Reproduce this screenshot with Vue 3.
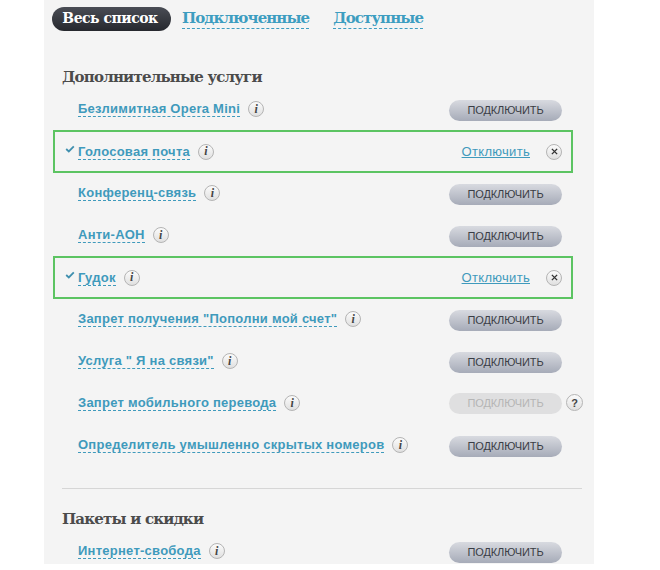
<script setup>
const groupA = [
  { name: 'Безлимитная Opera Mini', state: 'off' },
  { name: 'Голосовая почта', state: 'on' },
  { name: 'Конференц-связь', state: 'off' },
  { name: 'Анти-АОН', state: 'off' },
  { name: 'Гудок', state: 'on' },
  { name: 'Запрет получения "Пополни мой счет"', state: 'off' },
  { name: 'Услуга " Я на связи"', state: 'off' },
  { name: 'Запрет мобильного перевода', state: 'disabled' },
  { name: 'Определитель умышленно скрытых номеров', state: 'off' },
]
const groupB = [{ name: 'Интернет-свобода', state: 'off' }]
const groups = [
  { title: 'Дополнительные услуги', items: groupA },
  { title: 'Пакеты и скидки', items: groupB },
]
</script>

<template>
  <div class="page">
    <div class="panel">
      <nav class="tabs">
        <span class="pill">Весь список</span>
        <a class="tab">Подключенные</a>
        <a class="tab">Доступные</a>
      </nav>
      <section v-for="(g, gi) in groups" :key="g.title" class="group" :class="{ second: gi === 1 }">
        <h2 class="title">{{ g.title }}</h2>
        <div v-for="it in g.items" :key="it.name" class="row" :class="{ active: it.state === 'on' }">
          <svg v-if="it.state === 'on'" class="check" viewBox="0 0 10 8" width="10" height="8">
            <path d="M1.2 4 L3.8 6.4 L8.8 1.4" fill="none" stroke="#3f8fae" stroke-width="1.8" />
          </svg>
          <a class="name">{{ it.name }}</a>
          <span class="round info">i</span>
          <span class="spacer"></span>
          <template v-if="it.state === 'on'">
            <a class="off-link">Отключить</a>
            <span class="round close">
              <svg viewBox="0 0 8 8" width="7" height="7">
                <path d="M1 1 L7 7 M7 1 L1 7" stroke="#333" stroke-width="1.6" fill="none" />
              </svg>
            </span>
          </template>
          <template v-else>
            <span class="btn" :class="{ disabled: it.state === 'disabled' }">ПОДКЛЮЧИТЬ</span>
            <span v-if="it.state === 'disabled'" class="round help">?</span>
          </template>
        </div>
      </section>
    </div>
  </div>
</template>

<style scoped>
.page {
  width: 660px;
  height: 570px;
  background: #fff;
  overflow: hidden;
}
.panel {
  box-sizing: border-box;
  margin-left: 44px;
  width: 550px;
  height: 564px;
  padding: 7px 12px 0 18px;
  background: #f4f4f4;
}
.tabs {
  display: flex;
  align-items: center;
  height: 24px;
  margin-left: -10px;
}
.pill {
  box-sizing: border-box;
  width: 119px;
  height: 24px;
  padding-right: 3px;
  line-height: 23px;
  text-align: center;
  color: #fff;
  border-radius: 12px;
  background: linear-gradient(#4a4d55, #26282e);
  font-family: "DejaVu Serif", serif;
  font-weight: bold;
  font-size: 14px;
  letter-spacing: -0.5px;
}
.tab {
  margin-left: 11px;
  margin-right: 13px;
  color: #3d9dc0;
  border-bottom: 1px dashed #3d9dc0;
  line-height: 19px;
  font-family: "DejaVu Serif", serif;
  font-weight: bold;
  font-size: 15px;
  letter-spacing: -0.9px;
}
.group {
  margin-top: 36px;
}
.group.second {
  margin-top: 22px;
  padding-top: 20px;
  border-top: 1px solid #d6d6d6;
}
.title {
  margin: 0 0 1px;
  height: 20px;
  font: bold 15px/20px "DejaVu Serif", serif;
  letter-spacing: -0.8px;
  color: #4b4b4b;
}
.row {
  position: relative;
  box-sizing: border-box;
  display: flex;
  align-items: center;
  height: 42px;
  padding-left: 16px;
  margin-right: 20px;
}
.row.active {
  height: 43px;
  margin: 0 9px -1px -9px;
  padding: 0 11px 0 25px;
  outline: 2px solid #5cc462;
  outline-offset: -2px;
}
.check {
  position: absolute;
  left: 12px;
  top: 15px;
}
.name {
  font: bold 13px/15px "Liberation Sans", sans-serif;
  letter-spacing: 0.25px;
  color: #3f9abc;
  border-bottom: 1px dashed #3f9abc;
}
.round {
  box-sizing: border-box;
  display: flex;
  align-items: center;
  justify-content: center;
  flex: none;
  border-radius: 50%;
  border: 1px solid #b4b4b4;
  background: linear-gradient(#fbfbfb, #e0e0e0);
  color: #444;
}
.info {
  width: 16px;
  height: 16px;
  margin-left: 8px;
  font: italic bold 12px "Liberation Serif", serif;
}
.spacer {
  flex: 1;
}
.off-link {
  margin-right: 16px;
  font: 13px "Liberation Sans", sans-serif;
  letter-spacing: 0.3px;
  color: #3f9abc;
  text-decoration: underline;
}
.close {
  width: 16px;
  height: 16px;
}
.btn {
  box-sizing: border-box;
  width: 113px;
  height: 21px;
  margin-top: 2px;
  border-radius: 11px;
  background: linear-gradient(#d8dae0, #a6abb8);
  color: #3a3d45;
  text-align: center;
  font: 11px/21px "Liberation Sans", sans-serif;
  letter-spacing: -0.1px;
}
.btn.disabled {
  background: #dfdfe0;
  color: #b5b5b5;
  margin-top: 1px;
}
.help {
  position: absolute;
  right: -21px;
  top: 12px;
  width: 17px;
  height: 17px;
  font: bold 11px "Liberation Sans", sans-serif;
}
</style>
